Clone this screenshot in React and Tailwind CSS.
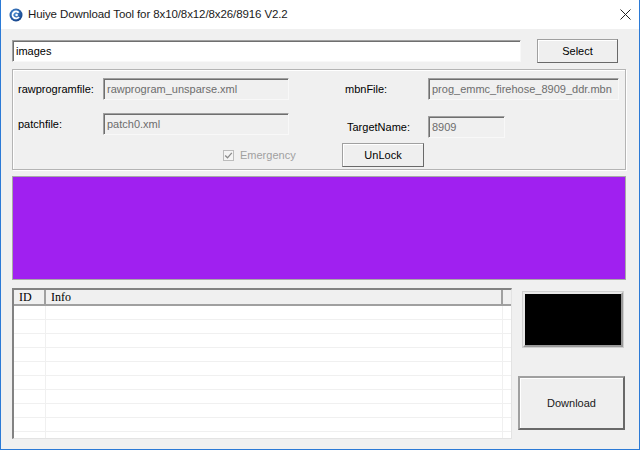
import React from 'react';

const sunken =
  'border border-t-[#a0a0a0] border-l-[#a0a0a0] border-r-[#f8f8f8] border-b-[#f8f8f8] shadow-[inset_1px_1px_0_#6f6f6f]';

const raised =
  'border border-[#a0a0a0] border-r-[#696969] border-b-[#696969] shadow-[inset_1px_1px_0_#ffffff] bg-[#efefef] flex items-center justify-center';

function Field({ value, width, white }) {
  return (
    <div
      className={`${sunken} ${width} h-[22px] flex items-center pl-[3px] overflow-hidden whitespace-nowrap ${
        white ? 'bg-white text-black' : 'bg-[#f0f0f0] text-[#6d6d6d]'
      }`}
    >
      {value}
    </div>
  );
}

function AppIcon() {
  return (
    <svg width="14" height="14" viewBox="0 0 14 14">
      <defs>
        <radialGradient id="ic" cx="0.4" cy="0.35" r="0.7">
          <stop offset="0" stopColor="#4a90d8" />
          <stop offset="1" stopColor="#123f86" />
        </radialGradient>
      </defs>
      <circle cx="7" cy="7" r="6.5" fill="url(#ic)" />
      <path d="M10.5 4.2 A4.4 4.4 0 1 0 10.8 9.2 L9 8.4 A2.5 2.5 0 1 1 8.8 5.2 Z" fill="#ffffff" />
      <circle cx="7.6" cy="7" r="1.3" fill="#ffffff" />
    </svg>
  );
}

export default function App() {
  const rows = Array.from({ length: 10 });

  return (
    <div className="w-[640px] h-[450px] flex flex-col border-x border-b border-[#2b7ad6] text-[11px] text-black font-['Liberation_Sans',Arial,sans-serif] overflow-hidden">
      {/* title bar */}
      <div className="h-[29px] bg-white flex items-center pl-[8px] pr-[8px] shrink-0">
        <AppIcon />
        <span className="ml-[5px] text-[11.5px] tracking-[-0.1px] text-[#1a1a1a]">
          Huiye Download Tool for 8x10/8x12/8x26/8916 V2.2
        </span>
        <svg className="ml-auto" width="11" height="11" viewBox="0 0 11 11">
          <path d="M0.5 0.5 L10.5 10.5 M10.5 0.5 L0.5 10.5" stroke="#222" strokeWidth="1" />
        </svg>
      </div>

      {/* body */}
      <div className="flex-1 bg-[#f0f0f0] pl-[11px] pt-[10px] flex flex-col">
        <div className="flex items-center h-[24px]">
          <Field value="images" width="w-[509px]" white />
          <div className={`${raised} ml-[16px] w-[81px] h-[24px]`}>Select</div>
        </div>

        {/* settings group */}
        <div className="mt-[6px] w-[614px] h-[101px] border border-[#b4b4b4] shadow-[inset_1px_1px_0_#ffffff,1px_1px_0_#ffffff] pt-[8px] pl-[5px] flex flex-col">
          <div className="flex items-center h-[22px]">
            <span className="w-[85px]">rawprogramfile:</span>
            <Field value="rawprogram_unsparse.xml" width="w-[186px]" />
            <span className="ml-[56px] w-[83px]">mbnFile:</span>
            <Field value="prog_emmc_firehose_8909_ddr.mbn" width="w-[191px]" />
          </div>

          <div className="flex items-start mt-[13px] h-[25px]">
            <span className="w-[85px] h-[22px] flex items-center">patchfile:</span>
            <Field value="patch0.xml" width="w-[186px]" />
            <div className="ml-[56px] mt-[3px] flex items-center">
              <span className="w-[83px] pl-[2px]">TargetName:</span>
              <Field value="8909" width="w-[77px]" />
            </div>
          </div>

          <div className="flex items-center mt-[5px] h-[24px]">
            <div className="ml-[205px] w-[119px] flex items-center">
              <div className="w-[11px] h-[11px] border border-[#bcbcbc] bg-[#f4f4f4] flex items-center justify-center">
                <svg width="9" height="9" viewBox="0 0 9 9">
                  <path d="M1.2 4.5 L3.5 6.8 L7.8 1.8" stroke="#8a8a8a" strokeWidth="1.3" fill="none" />
                </svg>
              </div>
              <span className="ml-[6px] text-[#a0a0a0]">Emergency</span>
            </div>
            <div className={`${raised} w-[82px] h-[24px]`}>UnLock</div>
          </div>
        </div>

        {/* progress colour band */}
        <div className="mt-[6px] w-[614px] h-[104px] bg-[#a020f0] border border-[#a8a8a8]" />

        {/* bottom area */}
        <div className="mt-[8px] flex items-start">
          <div className="w-[500px] h-[151px] border-t-2 border-l-2 border-[#828282] border-r border-b border-r-[#e3e3e3] border-b-[#e3e3e3] bg-white overflow-hidden flex flex-col">
            <div className="h-[16px] shrink-0 bg-[#f0f0f0] border-b-2 border-[#a0a0a0] flex font-['Liberation_Serif','Times_New_Roman',serif] text-[12px] leading-[14px]">
              <div className="w-[32px] pl-[5px] border-r-2 border-[#a0a0a0]">ID</div>
              <div className="w-[457px] pl-[5px] border-r-2 border-[#a0a0a0]">Info</div>
              <div className="flex-1" />
            </div>
            {rows.map((_, i) => (
              <div key={i} className="h-[14px] shrink-0 flex border-b border-[#f0f0f0]">
                <div className="w-[32px] border-r border-[#f0f0f0]" />
                <div className="w-[457px] border-r border-[#f0f0f0]" />
                <div className="flex-1" />
              </div>
            ))}
          </div>

          <div className="pl-[6px] flex flex-col">
            <div className="ml-[5px] mt-[4px] w-[100px] h-[55px] bg-black border-2 border-t-[#e8e8e8] border-l-[#e8e8e8] border-r-[#9a9a9a] border-b-[#9a9a9a] shadow-[0_0_0_1px_#d0d0d0]" />
            <div className={`${raised} mt-[29px] w-[107px] h-[54px] border-2 text-[#1a1a1a]`}>Download</div>
          </div>
        </div>
      </div>
    </div>
  );
}
